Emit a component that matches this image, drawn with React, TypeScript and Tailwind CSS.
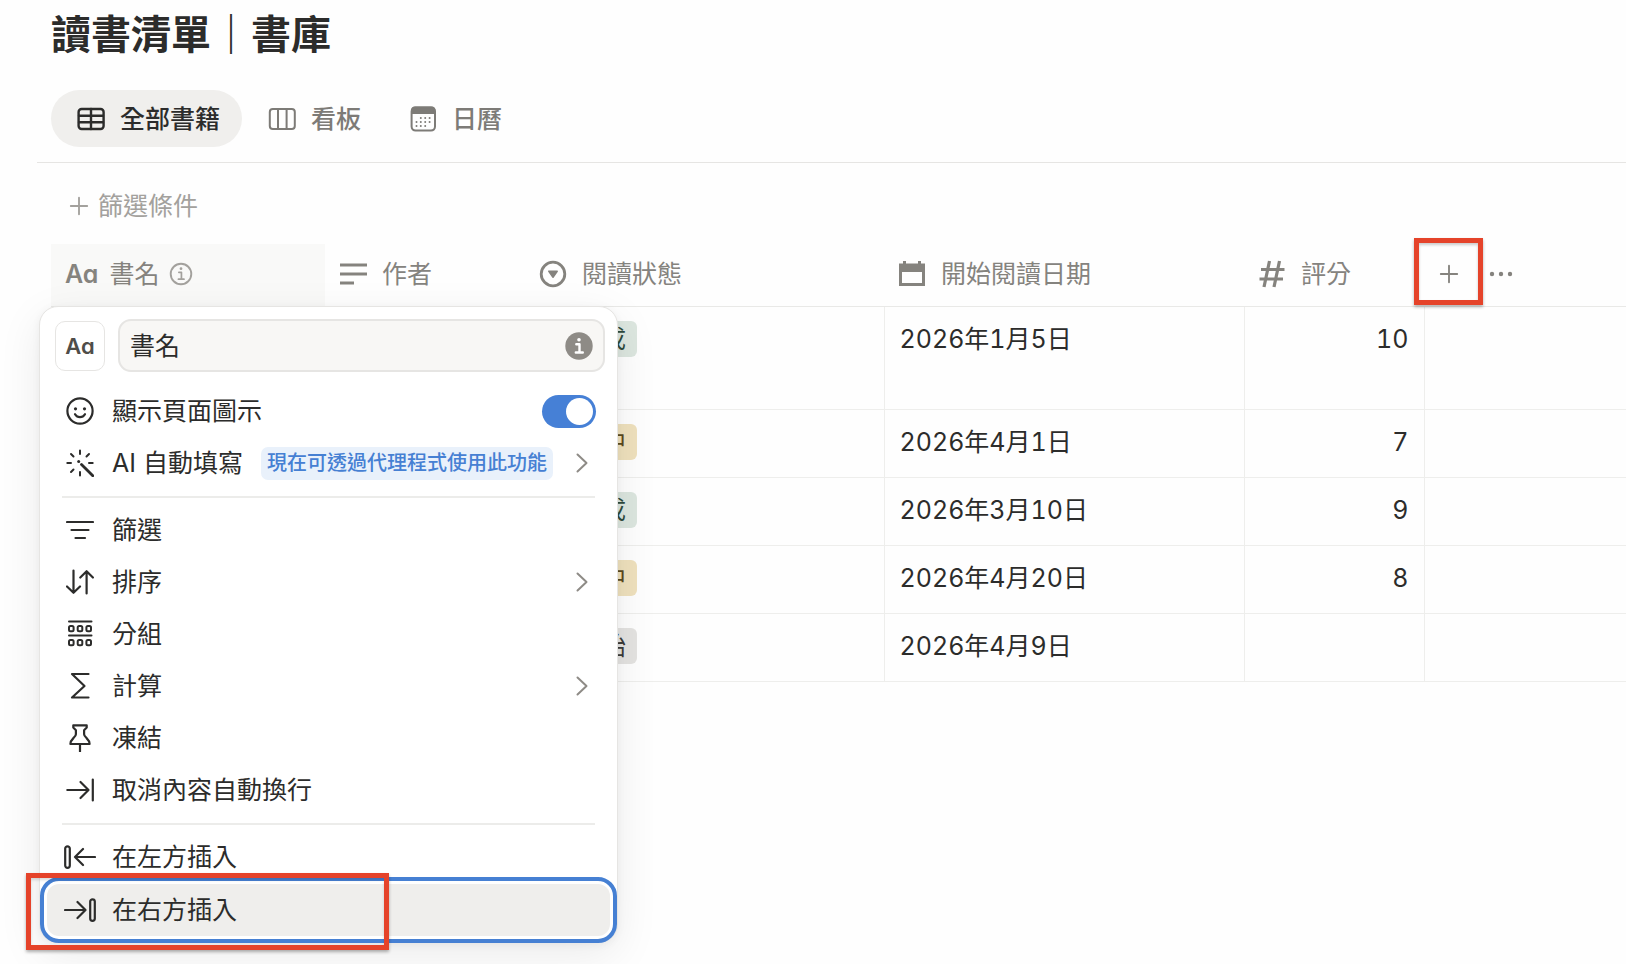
import type { ReactNode } from "react";

interface Book {
  status: string;
  tone: "green" | "yellow" | "gray";
  date: string;
  rating: string;
  tall?: boolean;
}

const BOOKS: Book[] = [
  { status: "已完成", tone: "green", date: "2026年1月5日", rating: "10", tall: true },
  { status: "閱讀中", tone: "yellow", date: "2026年4月1日", rating: "7" },
  { status: "已完成", tone: "green", date: "2026年3月10日", rating: "9" },
  { status: "閱讀中", tone: "yellow", date: "2026年4月20日", rating: "8" },
  { status: "未開始", tone: "gray", date: "2026年4月9日", rating: "" },
];

const TONES = {
  green: "bg-[#dce6df] text-[#2f4a3c]",
  yellow: "bg-[#efe1bd] text-[#5c4a1c]",
  gray: "bg-[#e4e3e1] text-[#3c3b38]",
};

function Icon({ children, width = 2, size = "size-7" }: { children: ReactNode; width?: number; size?: string }) {
  return (
    <svg
      viewBox="0 0 28 28"
      className={`${size} shrink-0`}
      fill="none"
      stroke="currentColor"
      strokeWidth={width}
      strokeLinecap="round"
      strokeLinejoin="round"
      aria-hidden="true"
    >
      {children}
    </svg>
  );
}

const icons = {
  table: (
    <Icon width={2.4}>
      <rect x="1.6" y="4" width="25" height="20" rx="3" />
      <path d="M2 10.7h24M2 17.3h24M14 4v20" />
    </Icon>
  ),
  board: (
    <Icon>
      <rect x="1.8" y="4" width="25" height="20" rx="3" />
      <path d="M10 4v20M18.6 4v20" />
    </Icon>
  ),
  calendar: (
    <Icon>
      <rect x="2.6" y="2.6" width="23.4" height="23" rx="4" />
      <path d="M3 8V5.5q0-3 3-3h16.5q3 0 3 3V8z" fill="currentColor" />
      <path d="M11.8 13h.01M16.2 13h.01M20.6 13h.01M7.5 17h.01M11.8 17h.01M16.2 17h.01M20.6 17h.01M7.5 21h.01M11.8 21h.01M16.2 21h.01" />
    </Icon>
  ),
  text: (
    <Icon width={3}>
      <path d="M1 5h27M1 14h27M1 23h14" strokeLinecap="butt" />
    </Icon>
  ),
  status: (
    <Icon width={2.8}>
      <circle cx="14" cy="14" r="11.8" />
      <path d="M9.8 11.2h8.4L14 17.2z" fill="currentColor" strokeWidth="1.5" />
    </Icon>
  ),
  date: (
    <Icon>
      <path
        d="M1 3.5h4V1h3v2.5h12V1h3v2.5h4V26H1zM4 12v11h20V12z"
        fill="currentColor"
        fillRule="evenodd"
        stroke="none"
      />
    </Icon>
  ),
  number: (
    <Icon width={3.2}>
      <path d="M11.5 1 6 27M21.5 1 16 27M3 9.5h23.5M1.5 19H25" strokeLinecap="butt" />
    </Icon>
  ),
  smile: (
    <Icon width={2.2}>
      <circle cx="14" cy="14" r="12.6" />
      <path d="M9 17.2q1.8 3 5 3t5-3" />
      <circle cx="9.5" cy="11.8" r="1.6" fill="currentColor" stroke="none" />
      <circle cx="18.5" cy="11.8" r="1.6" fill="currentColor" stroke="none" />
    </Icon>
  ),
  wand: (
    <Icon width={2}>
      <path d="M14 1.5V5M5 5l2.5 2.5M23 5l-2.5 2.5M1.3 14H5M23 14h3.7M5 23l2.5-2.5M14 23v3.5" />
      <path d="M12.7 12.5h.01" strokeWidth="3" />
      <path d="m15.5 15.5 11.3 11.3" strokeWidth="2.8" />
    </Icon>
  ),
  filter: (
    <Icon width={2.2}>
      <path d="M1 6h26M5.5 14h17M9.5 22H19" />
    </Icon>
  ),
  sort: (
    <Icon width={2.2}>
      <path d="M7.5 2.5v22M1 18.5l6.5 6.3 6.5-6.3M20.6 25.5v-22M14.3 9.5l6.3-6.3 6.3 6.3" />
    </Icon>
  ),
  group: (
    <Icon width={2}>
      <path d="M3 1.5h22.500M3 15.5h22.500" />
      <rect x="3" y="6" width="4.6" height="5.2" rx="1.5" />
      <rect x="11.7" y="6" width="4.6" height="5.2" rx="1.5" />
      <rect x="20.4" y="6" width="4.6" height="5.2" rx="1.5" />
      <rect x="3" y="20" width="4.6" height="5.2" rx="1.5" />
      <rect x="11.7" y="20" width="4.6" height="5.2" rx="1.5" />
      <rect x="20.4" y="20" width="4.6" height="5.2" rx="1.5" />
    </Icon>
  ),
  sum: (
    <Icon width={2.2}>
      <path d="M22.5 2H6l12.5 12L6 25.5h16.5" />
    </Icon>
  ),
  pin: (
    <Icon width={2.2}>
      <path d="M7.3 1.3h13.4v2.2l-2.6 2.7v4c0 1.500 1 2.400 2.500 3.900 1.900 1.900 3 3.400 3 5.900H4.400c0-2.500 1.100-4 3-5.900 1.500-1.500 2.500-2.400 2.500-3.900v-4L7.300 3.500zM14 20v7.500" />
    </Icon>
  ),
  wrap: (
    <Icon width={2.2}>
      <path d="M1.3 14h21M14.5 6l8 8-8 8M26.8 3.5v21" />
    </Icon>
  ),
  insertLeft: (
    <Icon width={2.2} size="h-7 w-8 -mx-0.5">
      <rect x="-.8" y="3.3" width="4.6" height="21.5" rx="2.3" />
      <path d="M29 14H9M17 6l-8 8 8 8" />
    </Icon>
  ),
  insertRight: (
    <Icon width={2.2} size="h-7 w-8 -mx-0.5">
      <path d="M-1 14h20.500M11.5 6l8 8-8 8" />
      <rect x="24.2" y="3.3" width="4.6" height="21.5" rx="2.3" />
    </Icon>
  ),
  plus: (
    <Icon width={2.6} size="size-5">
      <path d="M14 2.5v23M2.5 14h23" />
    </Icon>
  ),
  info: (
    <Icon width={2.2} size="size-6">
      <circle cx="14" cy="14" r="12" />
      <path d="M11.5 12h3v7.8M11 20h6.5" strokeWidth="2" />
      <circle cx="14" cy="7.8" r="1.6" fill="currentColor" stroke="none" />
    </Icon>
  ),
};

function Aa() {
  return <span className="font-semibold [font-feature-settings:'cv11']">Aa</span>;
}

function Tab({ icon, label, active }: { icon: ReactNode; label: string; active?: boolean }) {
  return (
    <button
      type="button"
      role="tab"
      aria-selected={!!active}
      className={`flex h-[57px] items-center gap-[15px] rounded-full pr-[22px] pl-[26px] font-medium ${
        active ? "bg-[#f0efed] text-[#2c2c2b]" : "text-[#7d7b77]"
      }`}
    >
      {icon}
      {label}
    </button>
  );
}

function HeadCell({ icon, label }: { icon: ReactNode; label: string }) {
  return (
    <th className="border-b border-[#e9e9e7] px-[14px] pb-0.5 font-normal">
      <div className="flex items-center gap-[15px]">
        {icon}
        {label}
      </div>
    </th>
  );
}

function Chevron() {
  return (
    <svg
      viewBox="0 0 12 20"
      className="mr-[15px] ml-auto h-5 w-3 text-[#8e8b86]"
      fill="none"
      stroke="currentColor"
      strokeWidth="2"
      strokeLinecap="round"
      strokeLinejoin="round"
      aria-hidden="true"
    >
      <path d="m1.5 1.5 9 8.5-9 8.5" />
    </svg>
  );
}

function MenuItem({ icon, label, children }: { icon: ReactNode; label: string; children?: ReactNode }) {
  return (
    <button type="button" role="menuitem" className="flex h-[52px] w-full items-center pr-[7px] pl-[19px] text-left">
      {icon}
      <span className="ml-[18px]">{label}</span>
      {children}
    </button>
  );
}

function ColumnMenu() {
  return (
    <div
      role="menu"
      className="absolute top-[62px] left-[-12px] z-10 w-[579px] rounded-[19px] border border-[#e6e5e3] bg-white px-[7px] pb-[6px] shadow-[0_12px_44px_rgba(0,0,0,0.08),0_2px_8px_rgba(0,0,0,0.05)]"
    >
      <div className="flex items-center gap-[13px] pt-3 pr-[5px] pb-[13px] pl-2">
        <button
          type="button"
          aria-label="屬性圖示"
          className="flex size-[50px] shrink-0 items-center justify-center rounded-[10px] border border-[#e6e5e3] text-[22px] text-[#4f4d49]"
        >
          <Aa />
        </button>
        <div className="flex h-[53px] min-w-0 flex-1 items-center rounded-[13px] border-2 border-[#e6e5e3] bg-[#f8f7f5] px-[10px]">
          <input
            type="text"
            aria-label="屬性名稱"
            defaultValue="書名"
            className="min-w-0 flex-1 bg-transparent outline-none"
          />
          <svg viewBox="0 0 28 28" className="size-7 text-[#8e8b86]" aria-hidden="true">
            <circle cx="14" cy="14" r="13.7" fill="currentColor" />
            <circle cx="14" cy="7.7" r="1.8" fill="#fff" />
            <path
              d="M11.3 12.2h3.2v8M10.800 20.5h7"
              fill="none"
              stroke="#fff"
              strokeWidth="2.4"
              strokeLinecap="round"
              strokeLinejoin="round"
            />
          </svg>
        </div>
      </div>

      <label className="flex h-[52px] items-center pr-[14px] pl-[19px]">
        {icons.smile}
        <span className="ml-[18px]">顯示頁面圖示</span>
        <input type="checkbox" role="switch" defaultChecked className="sr-only" />
        <span className="ml-auto flex h-[33px] w-[54px] items-center justify-end rounded-full bg-[#4680d6] pr-[3px]">
          <span className="size-[27px] rounded-full bg-white" />
        </span>
      </label>
      <MenuItem icon={icons.wand} label="AI 自動填寫">
        <span className="ml-[18px] flex h-[33px] items-center rounded-[7px] bg-[#e9f1fb] px-[6px] text-[20px] font-medium text-[#4680d3]">
          現在可透過代理程式使用此功能
        </span>
        <Chevron />
      </MenuItem>
      <hr className="mx-[15px] mt-[7px] mb-[6px] border-t-2 border-[#ececea]" />
      <MenuItem icon={icons.filter} label="篩選" />
      <MenuItem icon={icons.sort} label="排序">
        <Chevron />
      </MenuItem>
      <MenuItem icon={icons.group} label="分組" />
      <MenuItem icon={icons.sum} label="計算">
        <Chevron />
      </MenuItem>
      <MenuItem icon={icons.pin} label="凍結" />
      <MenuItem icon={icons.wrap} label="取消內容自動換行" />
      <hr className="mx-[15px] mt-[7px] mb-[6px] border-t-2 border-[#ececea]" />
      <MenuItem icon={icons.insertLeft} label="在左方插入" />
      <div className="relative mt-px rounded-[12px] bg-[#efeeec] ring-2 ring-white outline-4 outline-offset-[3px] outline-[#4680d3]">
        <MenuItem icon={icons.insertRight} label="在右方插入" />
        <span className="pointer-events-none absolute top-[-11px] left-[-21px] h-[77px] w-[363px] border-5 border-[#e5432a] shadow-[0_2px_3px_rgba(0,0,0,0.3),inset_0_2px_3px_rgba(0,0,0,0.15)]" />
      </div>
    </div>
  );
}

export default function App() {
  return (
    <main className="min-h-screen overflow-hidden bg-[#fefefe] pb-4 font-[Inter,'Noto_Sans_CJK_TC',sans-serif] text-[25px] leading-9 text-[#2c2c2b]">
      <h1 className="pt-3 pl-[51px] text-[40px] leading-[46px] font-bold">讀書清單｜書庫</h1>

      <div role="tablist" className="mt-8 ml-[37px] flex border-b border-[#e6e5e3] pb-[15px] pl-[14px]">
        <Tab icon={icons.table} label="全部書籍" active />
        <Tab icon={icons.board} label="看板" />
        <Tab icon={icons.calendar} label="日曆" />
      </div>

      <button type="button" className="mt-[25px] mb-5 ml-[69px] flex items-center gap-[9px] text-[#a3a19d]">
        {icons.plus}
        篩選條件
      </button>

      <div className="relative ml-[51px]">
        <table className="w-full table-fixed border-collapse text-left">
          <colgroup>
            <col className="w-[274px]" />
            <col className="w-[200px]" />
            <col className="w-[359px]" />
            <col className="w-[360px]" />
            <col className="w-[180px]" />
            <col />
          </colgroup>
          <thead className="text-[#85837e]">
            <tr className="h-[62px]">
              <th className="border-b border-[#e9e9e7] bg-[#f9f9f8] px-[14px] pb-0.5 font-normal">
                <div className="flex items-center">
                  <Aa />
                  <span className="mr-[10px] ml-[11px]">書名</span>
                  <span className="text-[#a3a19d]">{icons.info}</span>
                </div>
              </th>
              <HeadCell icon={icons.text} label="作者" />
              <HeadCell icon={icons.status} label="閱讀狀態" />
              <HeadCell icon={icons.date} label="開始閱讀日期" />
              <HeadCell icon={icons.number} label="評分" />
              <th className="border-b border-[#e9e9e7] p-0 pb-0.5">
                <div className="flex items-center">
                  <button
                    type="button"
                    aria-label="新增屬性"
                    className="relative flex size-12 items-center justify-center pl-0.5"
                  >
                    {icons.plus}
                    <span className="pointer-events-none absolute top-[-12px] left-[-10px] h-[67px] w-[69px] border-5 border-[#e5432a] shadow-[0_2px_3px_rgba(0,0,0,0.3),inset_0_2px_3px_rgba(0,0,0,0.2)]" />
                  </button>
                  <button type="button" aria-label="更多" className="ml-[17px]">
                    <svg viewBox="0 0 24 6" className="h-[6px] w-6" fill="currentColor" aria-hidden="true">
                      <circle cx="3" cy="3" r="2.2" />
                      <circle cx="12" cy="3" r="2.2" />
                      <circle cx="21" cy="3" r="2.2" />
                    </svg>
                  </button>
                </div>
              </th>
            </tr>
          </thead>
          <tbody className="tabular-nums">
            {BOOKS.map((book) => (
              <tr
                key={book.date}
                className={`border-b border-[#eeeeec] align-top ${book.tall ? "h-[103px]" : "h-[68px]"}`}
              >
                <td />
                <td />
                <td className="border-r border-[#eeeeec] px-[15px] pt-[14px] pb-4">
                  <span className={`inline-block rounded-[6px] px-[11px] align-top ${TONES[book.tone]}`}>
                    {book.status}
                  </span>
                </td>
                <td className="border-r border-[#eeeeec] px-[15px] pt-[14px] pb-4">{book.date}</td>
                <td className="border-r border-[#eeeeec] px-[15px] pt-[14px] pb-4 text-right">{book.rating}</td>
                <td />
              </tr>
            ))}
          </tbody>
        </table>
        <ColumnMenu />
      </div>
    </main>
  );
}
